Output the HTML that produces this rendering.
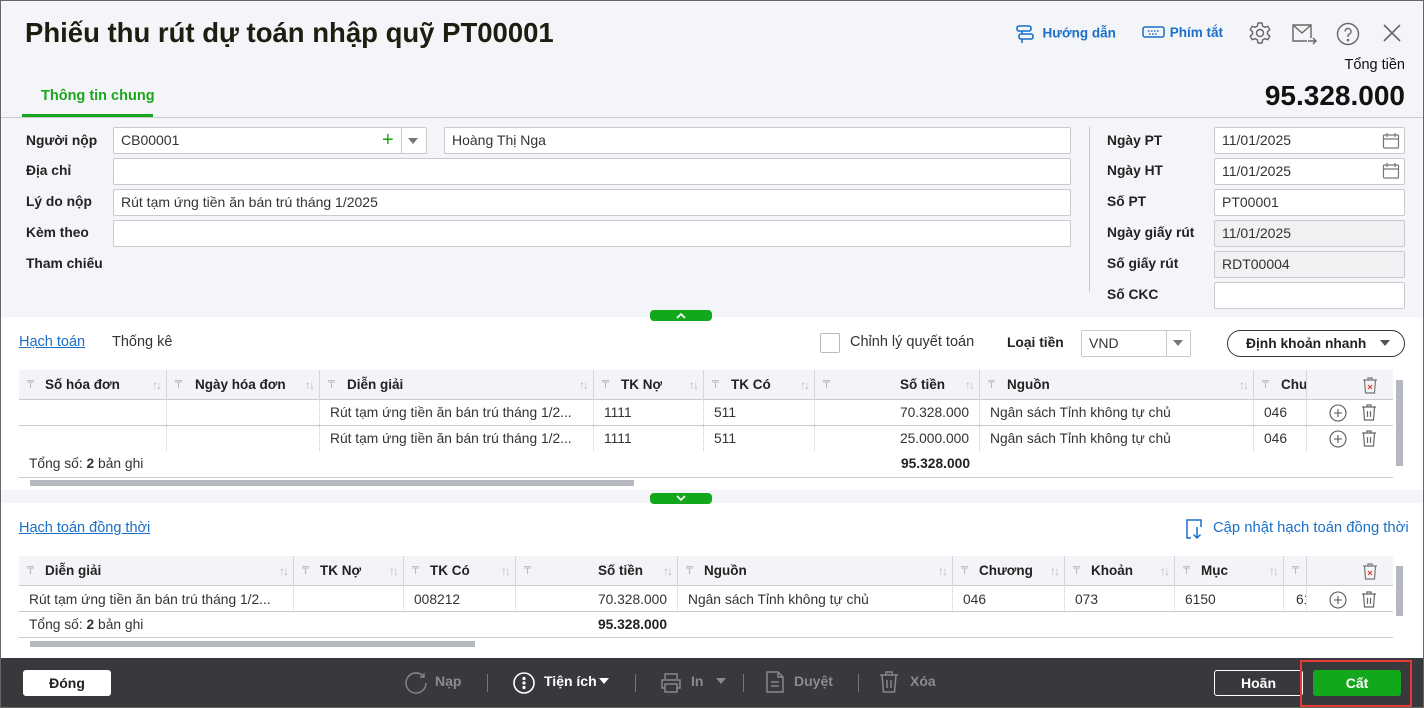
<!DOCTYPE html>
<html><head><meta charset="utf-8"><style>
*{box-sizing:border-box;margin:0;padding:0}
body{width:1424px;height:708px;overflow:hidden;font-family:"Liberation Sans",sans-serif;font-size:13px;color:#222;background:#f4f5f8;position:relative}
.a{position:absolute}
.lbl{position:absolute;font-weight:bold;font-size:13.8px;color:#222}
.inp{position:absolute;height:27px;background:#fff;border:1px solid #c8cad0;border-radius:2px;padding:0 7px;line-height:25px;font-size:14px;color:#333}
.dis{background:#f0f1f3}
.h{position:absolute;height:30px;border-right:1px solid #d5d7dc;font-weight:bold;line-height:30px;font-size:13.5px}
.h .p{position:absolute;left:8px;top:0;color:#bbb;font-weight:normal;font-size:11px}
.h .s{position:absolute;right:6px;top:0;color:#bbb;font-weight:normal;font-size:12px;letter-spacing:-2px}
.c{position:absolute;height:25px;line-height:25px;border-right:1px dotted #c8c8c8;white-space:nowrap;overflow:hidden;padding:0 10px;font-size:13.8px;color:#333}
.r{text-align:right}
.link{color:#1a6fc9;text-decoration:underline;font-size:14.5px;position:absolute}
.tb{position:absolute;top:673px;color:#8a8b90;font-weight:bold;font-size:14px}
</style></head><body>
<div class="a" style="left:0;top:0;width:1424px;height:708px;border:1px solid #666;z-index:20;pointer-events:none"></div>

<div class="a" style="left:25px;top:17px;font-size:27.5px;font-weight:bold;color:#1d1d10">Phiếu thu rút dự toán nhập quỹ PT00001</div>
<div class="a" style="left:1015px;top:24px;color:#1a6fc9;font-weight:bold;font-size:13.5px">
<svg width="20" height="20" viewBox="0 0 20 20" style="vertical-align:middle" fill="none" stroke="#1a6fc9" stroke-width="1.6"><rect x="2" y="2" width="14" height="5" rx="2"/><rect x="4" y="10" width="14" height="5" rx="2"/><path d="M7 7v3M7 15v4"/></svg>&nbsp; Hướng dẫn</div>
<div class="a" style="left:1142px;top:24px;color:#1a6fc9;font-weight:bold;font-size:13.5px">
<svg width="24" height="16" viewBox="0 0 24 16" style="vertical-align:-3px" fill="none" stroke="#1a6fc9" stroke-width="1.5"><rect x="1" y="3" width="21" height="10" rx="2"/><path d="M6 7h11M7 10h9" stroke-dasharray="1.5 1.5"/></svg>&nbsp;Phím tắt</div>
<svg class="a" style="left:1248px;top:21px" width="24" height="24" viewBox="0 0 24 24" fill="none" stroke="#666" stroke-width="1.4"><circle cx="12" cy="12" r="3.5"/><path d="M10 2h4l.6 3 2.3 1.3 2.9-1 2 3.4-2.3 2v2.6l2.3 2-2 3.4-2.9-1L14.6 19l-.6 3h-4l-.6-3-2.3-1.3-2.9 1-2-3.4 2.3-2V10.7L2.2 8.7l2-3.4 2.9 1L9.4 5z"/></svg>
<svg class="a" style="left:1291px;top:22px" width="28" height="24" viewBox="0 0 28 24" fill="none" stroke="#666" stroke-width="1.4"><path d="M20 16V3H2v16h14"/><path d="M2 3l9 8 9-8"/><path d="M17 19h8M22 16l3 3-3 3"/></svg>
<svg class="a" style="left:1336px;top:22px" width="24" height="24" viewBox="0 0 24 24" fill="none" stroke="#666" stroke-width="1.4"><circle cx="12" cy="12" r="10.5"/><path d="M9 9.5a3 3 0 1 1 4 2.8c-.7.3-1 .9-1 1.7V15"/><circle cx="12" cy="18" r=".6" fill="#666"/></svg>
<svg class="a" style="left:1382px;top:23px" width="20" height="20" viewBox="0 0 20 20" stroke="#666" stroke-width="1.6"><path d="M2 2l16 16M18 2L2 18"/></svg>
<div class="a" style="right:19px;top:57px;font-size:14.5px;color:#111">Tổng tiền</div>
<div class="a" style="right:19px;top:80px;font-size:28px;font-weight:bold;color:#111">95.328.000</div>
<div class="a" style="left:41px;top:88px;color:#1aa51a;font-weight:bold;font-size:14.5px">Thông tin chung</div>
<div class="a" style="left:22px;top:114px;width:131px;height:3px;background:#1aa51a"></div>
<div class="a" style="left:0;top:117px;width:1424px;height:1px;background:#c8cad0"></div>

<div class="lbl" style="left:26px;top:133px">Người nộp</div>
<div class="inp" style="left:113px;top:127px;width:314px">CB00001</div>
<div class="a" style="left:382px;top:130px;color:#1aa51a;font-size:20px;line-height:20px">+</div>
<div class="a" style="left:401px;top:128px;width:1px;height:25px;background:#c8cad0"></div>
<div class="a" style="left:408px;top:138px;border:5px solid transparent;border-top:6px solid #777"></div>
<div class="inp" style="left:444px;top:127px;width:627px">Hoàng Thị Nga</div>
<div class="lbl" style="left:26px;top:163px">Địa chỉ</div>
<div class="inp" style="left:113px;top:158px;width:958px"></div>
<div class="lbl" style="left:26px;top:194px">Lý do nộp</div>
<div class="inp" style="left:113px;top:189px;width:958px">Rút tạm ứng tiền ăn bán trú tháng 1/2025</div>
<div class="lbl" style="left:26px;top:225px">Kèm theo</div>
<div class="inp" style="left:113px;top:220px;width:958px"></div>
<div class="lbl" style="left:26px;top:256px">Tham chiếu</div>
<div class="a" style="left:1089px;top:127px;width:1px;height:165px;background:#c8cad0"></div>

<div class="lbl" style="left:1107px;top:133px">Ngày PT</div>
<div class="inp" style="left:1214px;top:127px;width:191px">11/01/2025</div>
<div class="lbl" style="left:1107px;top:163px">Ngày HT</div>
<div class="inp" style="left:1214px;top:158px;width:191px">11/01/2025</div>
<svg class="a" style="left:1382px;top:132px" width="18" height="18" viewBox="0 0 18 18" fill="none" stroke="#777" stroke-width="1.2"><rect x="1.5" y="3" width="15" height="13" rx="1"/><path d="M1.5 7h15M5 1v4M13 1v4"/></svg>
<svg class="a" style="left:1382px;top:162px" width="18" height="18" viewBox="0 0 18 18" fill="none" stroke="#777" stroke-width="1.2"><rect x="1.5" y="3" width="15" height="13" rx="1"/><path d="M1.5 7h15M5 1v4M13 1v4"/></svg>
<div class="lbl" style="left:1107px;top:194px">Số PT</div>
<div class="inp" style="left:1214px;top:189px;width:191px">PT00001</div>
<div class="lbl" style="left:1107px;top:225px">Ngày giấy rút</div>
<div class="inp dis" style="left:1214px;top:220px;width:191px">11/01/2025</div>
<div class="lbl" style="left:1107px;top:256px">Số giấy rút</div>
<div class="inp dis" style="left:1214px;top:251px;width:191px">RDT00004</div>
<div class="lbl" style="left:1107px;top:287px">Số CKC</div>
<div class="inp" style="left:1214px;top:282px;width:191px"></div>

<div class="a" style="left:0;top:317px;width:1424px;height:173px;background:#fff"></div>
<div class="a" style="left:650px;top:310px;width:62px;height:11px;background:#13a81c;border-radius:4px"></div>
<svg class="a" style="left:676px;top:312px" width="10" height="7" viewBox="0 0 10 7" fill="none" stroke="#fff" stroke-width="1.6"><path d="M1 6l4-4 4 4"/></svg>
<div class="link" style="left:19px;top:334px">Hạch toán</div>
<div class="a" style="left:112px;top:334px;font-size:14.5px;color:#333">Thống kê</div>
<div class="a" style="left:820px;top:333px;width:20px;height:20px;border:1px solid #bbb;border-radius:2px;background:#fff"></div>
<div class="a" style="left:850px;top:334px;font-size:14.5px;color:#333">Chỉnh lý quyết toán</div>
<div class="lbl" style="left:1007px;top:335px">Loại tiền</div>
<div class="inp" style="left:1081px;top:330px;width:110px">VND</div>
<div class="a" style="left:1166px;top:331px;width:1px;height:25px;background:#c8cad0"></div>
<div class="a" style="left:1173px;top:340px;border:5px solid transparent;border-top:6px solid #777"></div>
<div class="a" style="left:1227px;top:330px;width:178px;height:27px;border:1px solid #333;border-radius:14px;font-weight:bold;line-height:25px;padding-left:18px;font-size:13.8px;background:#fff">Định khoản nhanh</div>
<div class="a" style="left:1380px;top:340px;border:5px solid transparent;border-top:6px solid #555"></div>

<div class="a" style="left:19px;top:370px;width:1374px;height:30px;background:#f3f4f7;border-bottom:1px solid #c8cad0"></div>
<div class="h" style="left:19px;top:370px;width:148px"><span class="p">₸</span><span style="padding-left:26px">Số hóa đơn</span><span class="s">↑↓</span></div>
<div class="h" style="left:167px;top:370px;width:153px"><span class="p">₸</span><span style="padding-left:28px">Ngày hóa đơn</span><span class="s">↑↓</span></div>
<div class="h" style="left:320px;top:370px;width:274px"><span class="p">₸</span><span style="padding-left:27px">Diễn giải</span><span class="s">↑↓</span></div>
<div class="h" style="left:594px;top:370px;width:110px"><span class="p">₸</span><span style="padding-left:27px">TK Nợ</span><span class="s">↑↓</span></div>
<div class="h" style="left:704px;top:370px;width:111px"><span class="p">₸</span><span style="padding-left:27px">TK Có</span><span class="s">↑↓</span></div>
<div class="h" style="left:815px;top:370px;width:165px;text-align:right;padding-right:34px"><span class="p">₸</span>Số tiền<span class="s">↑↓</span></div>
<div class="h" style="left:980px;top:370px;width:274px"><span class="p">₸</span><span style="padding-left:27px">Nguồn</span><span class="s">↑↓</span></div>
<div class="h" style="left:1254px;top:370px;width:53px;overflow:hidden"><span class="p">₸</span><span style="padding-left:27px">Chư</span></div>
<svg class="a" style="left:1361px;top:376px" width="18" height="18" viewBox="0 0 18 18" fill="none" stroke="#777" stroke-width="1.2"><path d="M2 4h14M7 4V2h4v2M3.5 4l1 13h9l1-13"/><path d="M7 9l4 4M11 9l-4 4" stroke="#e53935"/></svg>
<div class="c" style="left:19px;top:400px;width:148px"></div><div class="c" style="left:167px;top:400px;width:153px"></div><div class="c" style="left:320px;top:400px;width:274px">Rút tạm ứng tiền ăn bán trú tháng 1/2...</div><div class="c" style="left:594px;top:400px;width:110px">1111</div><div class="c" style="left:704px;top:400px;width:111px">511</div><div class="c r" style="left:815px;top:400px;width:165px">70.328.000</div><div class="c" style="left:980px;top:400px;width:274px">Ngân sách Tỉnh không tự chủ</div><div class="c" style="left:1254px;top:400px;width:53px">046</div>
<div class="a" style="left:19px;top:425px;width:1374px;height:1px;background:#c8cad0"></div>
<div class="c" style="left:19px;top:426px;width:148px"></div><div class="c" style="left:167px;top:426px;width:153px"></div><div class="c" style="left:320px;top:426px;width:274px">Rút tạm ứng tiền ăn bán trú tháng 1/2...</div><div class="c" style="left:594px;top:426px;width:110px">1111</div><div class="c" style="left:704px;top:426px;width:111px">511</div><div class="c r" style="left:815px;top:426px;width:165px">25.000.000</div><div class="c" style="left:980px;top:426px;width:274px">Ngân sách Tỉnh không tự chủ</div><div class="c" style="left:1254px;top:426px;width:53px">046</div>
<svg class="a" style="left:1329px;top:404px" width="18" height="18" viewBox="0 0 18 18" fill="none" stroke="#555" stroke-width="1.1"><circle cx="9" cy="9" r="8"/><path d="M9 5v8M5 9h8"/></svg>
<svg class="a" style="left:1360px;top:403px" width="18" height="18" viewBox="0 0 18 18" fill="none" stroke="#666" stroke-width="1.2"><path d="M2 4h14M7 4V2h4v2M3.5 4l1 13h9l1-13M7.5 8v6M10.5 8v6"/></svg>
<svg class="a" style="left:1329px;top:430px" width="18" height="18" viewBox="0 0 18 18" fill="none" stroke="#555" stroke-width="1.1"><circle cx="9" cy="9" r="8"/><path d="M9 5v8M5 9h8"/></svg>
<svg class="a" style="left:1360px;top:429px" width="18" height="18" viewBox="0 0 18 18" fill="none" stroke="#666" stroke-width="1.2"><path d="M2 4h14M7 4V2h4v2M3.5 4l1 13h9l1-13M7.5 8v6M10.5 8v6"/></svg>
<div class="a" style="left:29px;top:456px;color:#333;font-size:13.8px">Tổng số: <b>2</b> bản ghi</div>
<div class="a" style="left:815px;top:456px;width:155px;text-align:right;font-weight:bold;font-size:13.8px">95.328.000</div>
<div class="a" style="left:19px;top:477px;width:1374px;height:1px;background:#c8cad0"></div>
<div class="a" style="left:30px;top:480px;width:604px;height:6px;background:#b5b8be"></div>
<div class="a" style="left:1396px;top:380px;width:7px;height:86px;background:#b5b8be"></div>

<div class="a" style="left:0;top:503px;width:1424px;height:155px;background:#fff"></div>
<div class="a" style="left:650px;top:493px;width:62px;height:11px;background:#13a81c;border-radius:4px"></div>
<svg class="a" style="left:676px;top:495px" width="10" height="7" viewBox="0 0 10 7" fill="none" stroke="#fff" stroke-width="1.6"><path d="M1 1l4 4 4-4"/></svg>
<div class="link" style="left:19px;top:520px">Hạch toán đồng thời</div>
<svg class="a" style="left:1185px;top:518px" width="18" height="22" viewBox="0 0 18 22" fill="none" stroke="#1a6fc9" stroke-width="1.5"><path d="M6 20H2V2h14v7"/><path d="M12 9v11M8.5 16.5L12 20l3.5-3.5"/></svg>
<div class="a" style="left:1213px;top:520px;color:#1a6fc9;font-size:14.8px">Cập nhật hạch toán đồng thời</div>

<div class="a" style="left:19px;top:556px;width:1374px;height:30px;background:#f3f4f7;border-bottom:1px solid #c8cad0"></div>
<div class="h" style="left:19px;top:556px;width:275px"><span class="p">₸</span><span style="padding-left:26px">Diễn giải</span><span class="s">↑↓</span></div>
<div class="h" style="left:294px;top:556px;width:110px"><span class="p">₸</span><span style="padding-left:26px">TK Nợ</span><span class="s">↑↓</span></div>
<div class="h" style="left:404px;top:556px;width:112px"><span class="p">₸</span><span style="padding-left:26px">TK Có</span><span class="s">↑↓</span></div>
<div class="h" style="left:516px;top:556px;width:162px;text-align:right;padding-right:34px"><span class="p">₸</span>Số tiền<span class="s">↑↓</span></div>
<div class="h" style="left:678px;top:556px;width:275px"><span class="p">₸</span><span style="padding-left:26px">Nguồn</span><span class="s">↑↓</span></div>
<div class="h" style="left:953px;top:556px;width:112px"><span class="p">₸</span><span style="padding-left:26px">Chương</span><span class="s">↑↓</span></div>
<div class="h" style="left:1065px;top:556px;width:110px"><span class="p">₸</span><span style="padding-left:26px">Khoản</span><span class="s">↑↓</span></div>
<div class="h" style="left:1175px;top:556px;width:109px"><span class="p">₸</span><span style="padding-left:26px">Mục</span><span class="s">↑↓</span></div>
<div class="h" style="left:1284px;top:556px;width:23px"><span class="p">₸</span></div>
<svg class="a" style="left:1361px;top:562px" width="18" height="18" viewBox="0 0 18 18" fill="none" stroke="#777" stroke-width="1.2"><path d="M2 4h14M7 4V2h4v2M3.5 4l1 13h9l1-13"/><path d="M7 9l4 4M11 9l-4 4" stroke="#e53935"/></svg>
<div class="c" style="left:19px;top:587px;width:275px">Rút tạm ứng tiền ăn bán trú tháng 1/2...</div><div class="c" style="left:294px;top:587px;width:110px"></div><div class="c" style="left:404px;top:587px;width:112px">008212</div><div class="c r" style="left:516px;top:587px;width:162px">70.328.000</div><div class="c" style="left:678px;top:587px;width:275px">Ngân sách Tỉnh không tự chủ</div><div class="c" style="left:953px;top:587px;width:112px">046</div><div class="c" style="left:1065px;top:587px;width:110px">073</div><div class="c" style="left:1175px;top:587px;width:109px">6150</div><div class="c" style="left:1284px;top:587px;width:23px;padding:0 0 0 12px">61</div>
<svg class="a" style="left:1329px;top:591px" width="18" height="18" viewBox="0 0 18 18" fill="none" stroke="#555" stroke-width="1.1"><circle cx="9" cy="9" r="8"/><path d="M9 5v8M5 9h8"/></svg>
<svg class="a" style="left:1360px;top:590px" width="18" height="18" viewBox="0 0 18 18" fill="none" stroke="#666" stroke-width="1.2"><path d="M2 4h14M7 4V2h4v2M3.5 4l1 13h9l1-13M7.5 8v6M10.5 8v6"/></svg>
<div class="a" style="left:19px;top:611px;width:1374px;height:1px;background:#c8cad0"></div>
<div class="a" style="left:29px;top:617px;color:#333;font-size:13.8px">Tổng số: <b>2</b> bản ghi</div>
<div class="a" style="left:516px;top:617px;width:151px;text-align:right;font-weight:bold;font-size:13.8px">95.328.000</div>
<div class="a" style="left:19px;top:637px;width:1374px;height:1px;background:#c8cad0"></div>
<div class="a" style="left:30px;top:641px;width:445px;height:6px;background:#b5b8be"></div>
<div class="a" style="left:1396px;top:566px;width:7px;height:50px;background:#b5b8be"></div>

<div class="a" style="left:0;top:658px;width:1424px;height:50px;background:#38393d"></div>
<div class="a" style="left:23px;top:670px;width:88px;height:26px;border:1px solid #fff;border-radius:3px;background:#fff;color:#222;font-weight:bold;text-align:center;line-height:24px;font-size:14px">Đóng</div>
<svg class="a" style="left:404px;top:671px" width="24" height="24" viewBox="0 0 24 24" fill="none" stroke="#888" stroke-width="1.4"><path d="M20 6A10 10 0 1 0 22 12"/><path d="M20 2v4h-4"/></svg>
<div class="tb" style="left:435px">Nạp</div>
<div class="a" style="left:487px;top:674px;width:1px;height:18px;background:#777"></div>
<svg class="a" style="left:512px;top:671px" width="24" height="24" viewBox="0 0 24 24" fill="none" stroke="#fff" stroke-width="1.6"><circle cx="12" cy="12" r="10"/><circle cx="12" cy="7.5" r=".8" fill="#fff"/><circle cx="12" cy="12" r=".8" fill="#fff"/><circle cx="12" cy="16.5" r=".8" fill="#fff"/></svg>
<div class="tb" style="left:544px;color:#fff">Tiện ích</div>
<div class="a" style="left:599px;top:678px;border:5px solid transparent;border-top:6px solid #fff"></div>
<div class="a" style="left:635px;top:674px;width:1px;height:18px;background:#777"></div>
<svg class="a" style="left:659px;top:671px" width="24" height="24" viewBox="0 0 24 24" fill="none" stroke="#888" stroke-width="1.5"><path d="M6 8V3h12v5M6 17H3V9h18v8h-3M6 13h12v8H6z"/></svg>
<div class="tb" style="left:691px">In</div>
<div class="a" style="left:716px;top:678px;border:5px solid transparent;border-top:6px solid #888"></div>
<div class="a" style="left:743px;top:674px;width:1px;height:18px;background:#777"></div>
<svg class="a" style="left:764px;top:670px" width="22" height="24" viewBox="0 0 22 24" fill="none" stroke="#888" stroke-width="1.5"><path d="M3 2h11l5 5v15H3z M14 2v5h5M7 12h8M7 16h8"/></svg>
<div class="tb" style="left:794px">Duyệt</div>
<div class="a" style="left:858px;top:674px;width:1px;height:18px;background:#777"></div>
<svg class="a" style="left:878px;top:670px" width="22" height="24" viewBox="0 0 22 24" fill="none" stroke="#888" stroke-width="1.5"><path d="M2 5h18M8 5V2h6v3M4 5l1.5 17h11L18 5M9 10v8M13 10v8"/></svg>
<div class="tb" style="left:910px">Xóa</div>
<div class="a" style="left:1214px;top:670px;width:89px;height:26px;border:1px solid #fff;border-radius:3px;color:#fff;font-weight:bold;text-align:center;line-height:24px;background:#38393d;font-size:14px">Hoãn</div>
<div class="a" style="left:1300px;top:660px;width:112px;height:47px;border:2px solid #e53935"></div>
<div class="a" style="left:1313px;top:670px;width:88px;height:26px;border-radius:3px;background:#13a81c;color:#fff;font-weight:bold;text-align:center;line-height:26px;font-size:14px">Cất</div>
</body></html>
